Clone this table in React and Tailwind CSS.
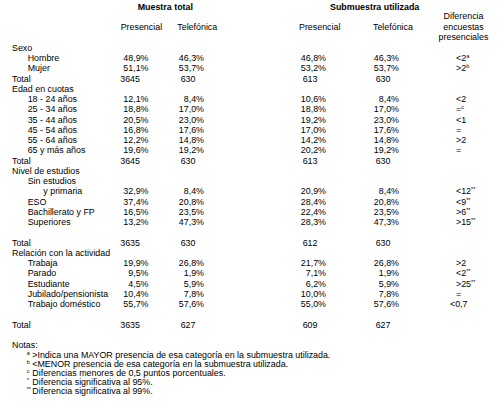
import React from "react";

const ROW = "flex h-[10.25px] leading-[10.25px] whitespace-nowrap";

const indent = ["pl-[12px]", "pl-[27.7px]", "pl-[43.3px]"];

const rows = [
  { label: "Sexo", lv: 0 },
  { label: "Hombre", lv: 1, v: ["48,9%", "46,3%", "46,8%", "46,3%"], d: "<2", ds: "a" },
  { label: "Mujer", lv: 1, v: ["51,1%", "53,7%", "53,2%", "53,7%"], d: ">2", ds: "b" },
  { label: "Total", lv: 0, total: true, v: ["3645", "630", "613", "630"] },
  { label: "Edad en cuotas", lv: 0 },
  { label: "18 - 24 años", lv: 1, v: ["12,1%", "8,4%", "10,6%", "8,4%"], d: "<2" },
  { label: "25 - 34 años", lv: 1, v: ["18,8%", "17,0%", "18,8%", "17,0%"], d: "=", ds: "c" },
  { label: "35 - 44 años", lv: 1, v: ["20,5%", "23,0%", "19,2%", "23,0%"], d: "<1" },
  { label: "45 - 54 años", lv: 1, v: ["16,8%", "17,6%", "17,0%", "17,6%"], d: "=" },
  { label: "55 - 64 años", lv: 1, v: ["12,2%", "14,8%", "14,2%", "14,8%"], d: ">2" },
  { label: "65 y más años", lv: 1, v: ["19,6%", "19,2%", "20,2%", "19,2%"], d: "=" },
  { label: "Total", lv: 0, total: true, v: ["3645", "630", "613", "630"] },
  { label: "Nivel de estudios", lv: 0 },
  { label: "Sin estudios", lv: 1 },
  { label: "y primaria", lv: 2, v: ["32,9%", "8,4%", "20,9%", "8,4%"], d: "<12", ds: "**" },
  { label: "ESO", lv: 1, v: ["37,4%", "20,8%", "28,4%", "20,8%"], d: "<9", ds: "**" },
  { label: "Bachillerato y FP", lv: 1, v: ["16,5%", "23,5%", "22,4%", "23,5%"], d: ">6", ds: "**" },
  { label: "Superiores", lv: 1, v: ["13,2%", "47,3%", "28,3%", "47,3%"], d: ">15", ds: "**" },
  { blank: true },
  { label: "Total", lv: 0, total: true, v: ["3635", "630", "612", "630"] },
  { label: "Relación con la actividad", lv: 0 },
  { label: "Trabaja", lv: 1, v: ["19,9%", "26,8%", "21,7%", "26,8%"], d: ">2" },
  { label: "Parado", lv: 1, v: ["9,5%", "1,9%", "7,1%", "1,9%"], d: "<2", ds: "**" },
  { label: "Estudiante", lv: 1, v: ["4,5%", "5,9%", "6,2%", "5,9%"], d: ">25", ds: "**" },
  { label: "Jubilado/pensionista", lv: 1, v: ["10,4%", "7,8%", "10,0%", "7,8%"], d: "=" },
  { label: "Trabajo doméstico", lv: 1, v: ["55,7%", "57,6%", "55,0%", "57,6%"], d: "<0,7", shift: true },
  { blank: true },
  { label: "Total", lv: 0, total: true, v: ["3635", "627", "609", "627"] },
  { blank: true },
];

const notes = [
  ["a", ">Indica una MAYOR presencia de esa categoría en la submuestra utilizada."],
  ["b", "<MENOR presencia de esa categoría en la submuestra utilizada."],
  ["c", "Diferencias menores de 0,5 puntos porcentuales."],
  ["*", "Diferencia significativa al 95%."],
  ["**", "Diferencia significativa al 99%."],
];

function Sup({ children }) {
  return <sup className="text-[5.5px] top-[-3.2px]">{children}</sup>;
}

function DataRow({ r }) {
  if (r.blank) return <div className={ROW} />;
  const v = r.v || [];
  const pad = r.total ? "pr-[8.5px]" : "";
  return (
    <div className={ROW}>
      <div className={`w-[100px] shrink-0 ${indent[r.lv]}`}>{r.label}</div>
      <div className={`w-[48.5px] shrink-0 text-right ${pad}`}>{v[0]}</div>
      <div className={`w-[55.5px] shrink-0 text-right ${pad}`}>{v[1]}</div>
      <div className={`w-[122px] shrink-0 text-right ${pad}`}>{v[2]}</div>
      <div className={`w-[73px] shrink-0 text-right ${pad}`}>{v[3]}</div>
      {r.d && (
        <div className={r.shift ? "pl-[51px]" : "pl-[57px]"}>
          {r.d}
          {r.ds && <Sup>{r.ds}</Sup>}
        </div>
      )}
    </div>
  );
}

export default function App() {
  return (
    <div className="w-[500px] h-[407px] overflow-hidden bg-white pt-[1.6px] text-[8.9px] text-black font-['Liberation_Sans',Arial,sans-serif]">
      <div className="flex h-[41.4px]">
        <div className="w-[438px] shrink-0">
          <div className={`${ROW} pl-[137.7px] font-bold`}>
            <div className="w-[192.3px] shrink-0">Muestra total</div>
            <div>Submuestra utilizada</div>
          </div>
          <div className={ROW} />
          <div className={`${ROW} pl-[120.7px]`}>
            <div className="w-[56.6px] shrink-0">Presencial</div>
            <div className="w-[121.7px] shrink-0">Telefónica</div>
            <div className="w-[74px] shrink-0">Presencial</div>
            <div>Telefónica</div>
          </div>
        </div>
        <div className="w-[51px] shrink-0 pt-[9.6px] text-center leading-[10.6px] whitespace-nowrap">
          <div>Diferencia</div>
          <div>encuestas</div>
          <div>presenciales</div>
        </div>
      </div>

      {rows.map((r, i) => (
        <DataRow key={i} r={r} />
      ))}

      <div className={`${ROW} pl-[12px]`}>Notas:</div>
      <div className="pt-[0.4px]">
        {notes.map(([m, t]) => (
          <div key={m} className="flex h-[9.1px] leading-[9.1px] whitespace-nowrap pl-[26.7px]">
            <span className="w-[5.6px] shrink-0">
              <Sup>{m}</Sup>
            </span>
            <span>{t}</span>
          </div>
        ))}
      </div>
    </div>
  );
}
